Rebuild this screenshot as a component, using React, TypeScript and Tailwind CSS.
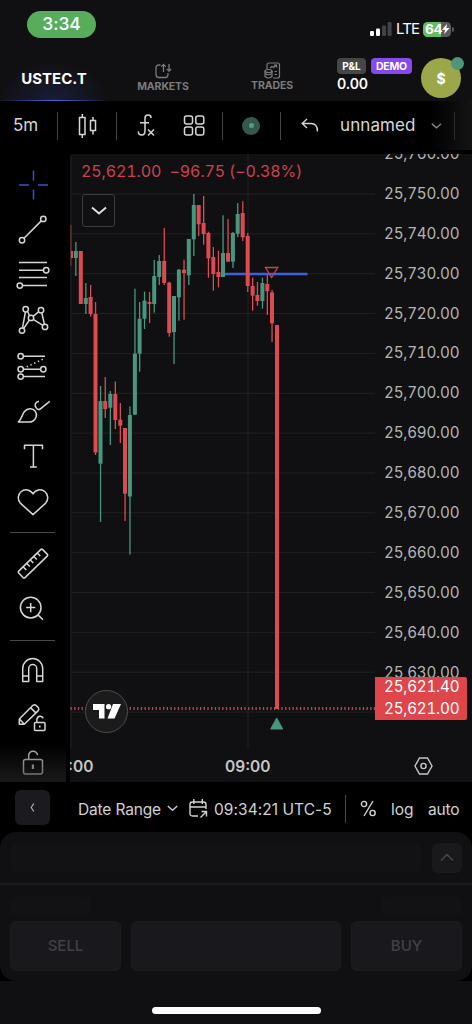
import type { ReactNode } from "react";

const RED = "#df4950";
const GREEN = "#47977f";

// x, high, low, body top, body bottom, up
const candles: [number, number, number, number, number, boolean][] = [
  [75.8, 242, 276, 251, 258, true],
  [80.8, 251, 304, 251, 304, false],
  [85.8, 283, 314, 298, 304, true],
  [90.6, 285, 316.5, 297, 314, false],
  [95.5, 302, 455, 314, 452.5, false],
  [100.5, 386, 522, 401, 463.7, true],
  [105.2, 377, 418, 401, 409, false],
  [110.3, 391, 445, 394, 407.7, true],
  [115.3, 381.5, 429, 394, 420, false],
  [120.3, 403, 443, 419.7, 425.7, false],
  [125, 428, 521, 428, 493.7, false],
  [129.9, 406.5, 554.7, 415, 496.5, true],
  [134.9, 288.7, 414.7, 353.7, 414.7, true],
  [139.6, 302, 371.7, 318.7, 353.7, true],
  [144.5, 291.7, 329, 300.7, 318.7, true],
  [149.5, 292, 323, 302, 304, false],
  [154.2, 260, 312.7, 276, 304, true],
  [159.2, 255, 285, 261, 277, true],
  [164.2, 228, 285, 261, 283, false],
  [169.2, 281.7, 336.7, 282.7, 333, false],
  [174, 296, 364, 296, 332, true],
  [178.9, 269, 320.7, 269.7, 297.3, true],
  [184, 259.7, 319.7, 269.7, 273, false],
  [188.8, 239, 285, 239, 275.3, true],
  [193.8, 194, 256, 205, 239.3, true],
  [198.7, 205, 236, 205, 224.3, false],
  [203.6, 196, 244.7, 223, 234, false],
  [208.4, 231.7, 277.7, 233, 258.3, false],
  [213.3, 247, 290.7, 257, 274, false],
  [218.4, 250.7, 287.3, 272, 277, false],
  [223, 215.3, 277, 253, 277, true],
  [228, 219, 261.7, 253, 261.7, false],
  [232.9, 232, 268, 233, 261.7, true],
  [237.7, 203, 237, 214, 233.7, true],
  [242.7, 201.3, 241, 213, 237.3, false],
  [247.7, 233, 292, 236, 286, false],
  [252.6, 277.7, 310.7, 286, 295.7, false],
  [257.4, 282, 305.7, 295, 301, false],
  [262.4, 277.7, 308.7, 283, 301, true],
  [267.3, 275, 315, 284, 291.3, false],
  [272, 290, 342, 292.3, 323.3, false],
  [277, 325, 709, 325, 709, false],
];

const prices = [
  "25,760.00", "25,750.00", "25,740.00", "25,730.00", "25,720.00", "25,710.00", "25,700.00",
  "25,690.00", "25,680.00", "25,670.00", "25,660.00", "25,650.00", "25,640.00", "25,630.00",
];

function Tool({ children, color = "#d6d6d6" }: { children: ReactNode; color?: string }) {
  return (
    <svg
      width="44"
      height="45.3"
      viewBox="0 0 44 45.3"
      className="ml-[11px] block shrink-0"
      fill="none"
      stroke={color}
      strokeWidth="1.5"
      strokeLinejoin="round"
    >
      {children}
    </svg>
  );
}

function Divider() {
  return <div className="my-2 ml-[10px] h-[1.5px] w-[45px] shrink-0 bg-[#4a4a4a]" />;
}

function StatusBar() {
  return (
    <div className="flex h-[50px] shrink-0 items-start">
      <div className="mt-[11px] ml-[27px] flex h-[27px] w-[69px] items-center justify-center rounded-full bg-[#58ad5b] text-[17.5px] font-medium tracking-[-0.1px] text-white">
        3:34
      </div>
      <div className="mt-[19px] ml-[274px] flex h-5 items-center">
        <svg width="22" height="14" viewBox="0 0 22 14" className="block">
          <rect x="0" y="9" width="4" height="5" rx="1.2" fill="#fff" />
          <rect x="6" y="6.5" width="4" height="7.5" rx="1.2" fill="#fff" />
          <rect x="12" y="3.5" width="4" height="10.5" rx="1.2" fill="#424244" />
          <rect x="17.6" y="0" width="4" height="14" rx="1.2" fill="#424244" />
        </svg>
        <span className="ml-[4px] w-[27px] text-[15px] tracking-[-0.9px] text-white">LTE</span>
        <div className="flex h-[15px] w-[28px] items-center overflow-hidden rounded-[4.5px] bg-linear-to-r from-[#62bd63] from-65% to-[#5b5b5e] to-65%">
          <span className="ml-[2px] text-[13.5px] font-bold tracking-[-0.3px] text-white">64</span>
          <svg width="8" height="10" viewBox="0 0 8 10" className="block shrink-0">
            <path d="M5 0 0 5.8h3L2.2 10 7.6 4H4.4z" fill="#fff" />
          </svg>
        </div>
        <div className="ml-[1px] h-[5px] w-[1.5px] rounded-r bg-[#5b5b5e]" />
      </div>
    </div>
  );
}

function NavTabs() {
  return (
    <div className="flex h-[51px] shrink-0">
      <div className="relative flex w-[108px] items-center justify-center bg-[radial-gradient(ellipse_50%_80%_at_50%_100%,#191d38_0%,#101012_100%)] pt-[7px] text-[15px] font-bold text-white">
        USTEC.T
        <div className="absolute bottom-0 left-0 h-[1.5px] w-full bg-linear-to-r from-transparent via-[#4c66dc] to-transparent" />
      </div>
      <div className="flex w-[110px] flex-col items-center pt-[13px] text-[#7b7b7d]">
        <svg width="17" height="16" viewBox="0 0 17 16" fill="none" stroke="currentColor" strokeWidth="1.3">
          <path d="M5.5 2H4Q1 2 1 5v6.5Q1 14.5 4 14.5h6.5Q13 14.5 13 11.5V10M8.5 9V1.500M6.3 3.6l2.200-2.200 2.200 2.200M14 1v7M11.800 6l2.200 2.200L16.200 6" />
        </svg>
        <span className="mt-[1px] text-[10.5px] leading-[14px] font-bold tracking-[-0.1px]">MARKETS</span>
      </div>
      <div className="flex w-[108px] flex-col items-center pt-[12px] text-[#7b7b7d]">
        <svg width="17" height="17" viewBox="0 0 17 17" fill="none" stroke="currentColor" strokeWidth="1.2">
          <path d="M3 7V3Q3 1 5 1h8.500Q15.500 1 15.500 3v11Q15.500 16 13.500 16H9M6 6l2-1.500 1.500 1L12 3M12.500 5.500V3H10M10.500 9.500H13M10.500 12.500H13" />
          <ellipse cx="4.5" cy="9" rx="3.5" ry="1.5" />
          <path d="M1 9v5.500Q4.500 17.500 8 14.500V9M1 11.500q3.500 2.500 7 0" />
        </svg>
        <span className="text-[10.5px] leading-[14px] font-bold tracking-[-0.1px]">TRADES</span>
      </div>
      <div className="ml-[11px] w-[76px] pt-[8px]">
        <div className="flex h-4 gap-[5px] text-[10.5px] font-bold text-white">
          <span className="flex w-[29px] items-center justify-center rounded-[4px] bg-[#464649] text-[10px]">P&amp;L</span>
          <span className="flex w-[41px] items-center justify-center rounded-[4px] bg-[#8549f0] pt-px tracking-[-0.2px]">DEMO</span>
        </div>
        <div className="text-[14px] leading-[19px] font-semibold tracking-[-0.1px] text-white">0.00</div>
      </div>
      <div className="relative mt-[8px] ml-[8px] flex size-[40px] items-center justify-center rounded-full bg-[#9ca749] text-[14px] font-bold text-white">
        $
        <span className="absolute -top-[1px] -right-[3px] size-[13px] rounded-full bg-[#4d9678]" />
      </div>
    </div>
  );
}

function ChartToolbar() {
  return (
    <div className="relative flex h-[49px] shrink-0 items-center bg-black text-[17px] text-[#d6d6d6]">
      <span className="ml-[13px] w-[44px]">5m</span>
      <div className="h-[28px] w-px bg-[#434343]" />
      <svg width="20" height="26" viewBox="0 0 20 26" className="ml-[20px]" fill="none" stroke="currentColor" strokeWidth="1.5">
        <path d="M1.500 4.500h5.500v17H1.500zM4.300 4.500V1M4.300 25v-3.500M12.500 7.500H17.500v10h-5zM15 7.500V4M15 17.500v4" />
      </svg>
      <div className="ml-[18px] h-[28px] w-px bg-[#434343]" />
      <svg width="20" height="24" viewBox="0 0 20 24" className="-mt-[2px] ml-[20px]" fill="none" stroke="currentColor" strokeWidth="1.5">
        <path d="M14 5V4.500q0-2.500-3-2.500T8 5v12.500q0 4.500-3.300 4.500T1.300 18.500M3 9.800h9M11 16.500l6 6M17 16.500l-6 6" />
      </svg>
      <svg width="22" height="22" viewBox="0 0 22 22" className="ml-[26px]" fill="none" stroke="currentColor" strokeWidth="1.5">
        <rect x="1.5" y="1" width="8" height="8" rx="2" />
        <rect x="12.8" y="1" width="8" height="8" rx="2" />
        <rect x="1.5" y="12" width="8" height="8" rx="2" />
        <rect x="12.8" y="12" width="8" height="8" rx="2" />
      </svg>
      <div className="ml-[17px] h-[28px] w-px bg-[#434343]" />
      <div className="ml-[19px] flex size-[18px] items-center justify-center rounded-full bg-[#33594a]">
        <div className="size-[5px] rounded-full bg-[#4fa083]" />
      </div>
      <div className="ml-[20px] h-[28px] w-px bg-[#434343]" />
      <svg width="18" height="15" viewBox="0 0 18 15" className="ml-[20px]" fill="none" stroke="currentColor" strokeWidth="1.4">
        <path d="M6 1 1.200 5.500 6 10M1.200 5.500H10q6.500 0 6.500 8" />
      </svg>
      <span className="ml-[21px] w-[91px] tracking-[0.1px]">unnamed</span>
      <svg width="11" height="6" viewBox="0 0 11 6" fill="none" stroke="#9a9a9a" strokeWidth="1.3">
        <path d="m.8.8 4.700 4 4.700-4" />
      </svg>
      <div className="ml-[12px] h-[28px] w-px bg-[#434343]" />
      <div className="absolute top-0 right-0 h-full w-[42px] bg-linear-to-r from-transparent to-[#161617]/90" />
    </div>
  );
}

function DrawingTools() {
  return (
    <div className="relative flex h-full w-[70px] shrink-0 flex-col bg-black pt-[11.5px]">
      <Tool color="#3153d0">
        <path d="M8 23h10M27 23h10M22.500 8.500v10M22.500 27.500v10" />
      </Tool>
      <Tool>
        <circle cx="11" cy="33.2" r="2.7" />
        <circle cx="32.3" cy="11.9" r="2.7" />
        <path d="M13 31.200 30.300 13.900" />
      </Tool>
      <Tool>
        <path d="M8 10.600h28M8 18.200h24.500M8 25.600h28M11.500 33.600H36" />
        <circle cx="35.2" cy="18.2" r="2.7" />
        <circle cx="8.8" cy="33.6" r="2.7" />
      </Tool>
      <Tool>
        <path d="m14.400 15-2.900 15.900M16.500 14.500l2 4M22.200 19.200l5.500-4.300M22.300 22.400l9.500 6M30.800 16l2.600 11.200M18.400 23l-5.600 8.300" />
        <circle cx="14.7" cy="12.3" r="2.7" />
        <circle cx="30" cy="13.3" r="2.7" />
        <circle cx="20" cy="20.9" r="2.7" />
        <circle cx="11" cy="33.6" r="2.7" />
        <circle cx="34" cy="29.9" r="2.7" />
      </Tool>
      <Tool>
        <path d="M12.500 13.300H34M12.500 26.300h17M12.500 33.600H34" />
        <path d="m15.700 23.800 18-8.400" strokeDasharray="1.4 2.7" />
        <circle cx="9.7" cy="13.3" r="2.7" />
        <circle cx="9.7" cy="26.3" r="2.7" />
        <circle cx="32.3" cy="26.3" r="2.7" />
        <circle cx="9.7" cy="33.6" r="2.7" />
      </Tool>
      <Tool>
        <path d="M7.300 34c3.500-3 3.500-7 6.200-10.500 2.800-3.600 8.300-3.600 10.800-.3 2.500 3.500.7 8.300-3.100 10.300-.9.500-1.900.5-2.900.5zM28 13.300c-3.500.5-5 3.500-2.800 6.500 1.500 2.200 3 2.200 4.500.8l9-7.300" />
      </Tool>
      <Tool>
        <path d="M13.500 16.200V12.200h18v4M22.400 12.200V34M19 34h6.800" />
      </Tool>
      <Tool>
        <path d="M22 14.800c-2.500-4.500-8.500-5.200-12-2-3.500 3-3.500 8-.7 11.300L22 35.600l12.700-11.500c2.800-3.300 2.800-8.300-.7-11.300-3.500-3.200-9.500-2.500-12 2z" />
      </Tool>
      <Divider />
      <Tool>
        <path d="M29.700 8.600q1-1 2 0l4.500 4.500q1 1 0 2L14 36.600q-1 1-2 0l-4.300-4.500q-1-1 0-2zM12.300 26l3 3M15.800 22.500l3 3M19.300 19l3 3M22.800 15.500l3 3M26.300 12l3 3" />
      </Tool>
      <Tool>
        <circle cx="19.7" cy="20.6" r="10.3" />
        <path d="m27.200 28.100 4.800 4.700M19.700 16v9.200M15.100 20.600h9.200" />
      </Tool>
      <Divider />
      <Tool>
        <path d="M11.700 32.600V19.500a10 10 0 0 1 20 0v13.100h-6V19.500a4 4 0 0 0-8 0v13.100zM11.700 26.900h6M25.700 26.900h6" />
      </Tool>
      <Tool>
        <path d="M8.300 29.300V24L22 10.300q1.500-1.200 3 0l2.300 2.300q1.200 1.500 0 3L13.300 29.300zM19.500 12.600l5.300 5.300M8.500 24l4.800 5.300" />
        <rect x="23.5" y="27.6" width="10.5" height="8" rx="1" />
        <path d="M25.900 27.600v-3.200q.4-3.200 3.200-3.200 2.400 0 2.900 2.200M28.800 30.500v2" />
      </Tool>
      <Tool color="#b4b4b4">
        <rect x="12.5" y="19.5" width="19" height="14.5" rx="2" />
        <path d="M17.700 19.500v-4.300q.6-4 4.300-4t4.600 4" />
        <path d="M21.900 24.500v4.500" strokeWidth="2.2" />
      </Tool>
      <div className="absolute bottom-0 left-0 h-[38px] w-[66px] bg-linear-to-b from-transparent to-[#2a2a2a]/60" />
    </div>
  );
}

function Chart() {
  return (
    <div className="relative mt-[4px] flex w-[402px] flex-col overflow-hidden rounded-tl-[4px] bg-[#101012]">
      <div className="flex h-[594px]">
        <svg width="305" height="594" viewBox="70 154 305 594" className="block shrink-0">
          <g stroke="#202023" strokeWidth="1">
            {prices.map((p, i) => (
              <path key={p} d={`M71 ${194 + i * 39.85}H375`} />
            ))}
            <path d="M248 154V748M71 154V748" />
          </g>
          <path d="M70.500 708.500H375" stroke="#c2464e" strokeWidth="3" strokeDasharray="1.3 2.4" />
          <path d="M223 274H307.500" stroke="#3e5fdc" strokeWidth="2.6" />
          <path d="M71 225V266" stroke="#7e3238" strokeWidth="1.2" />
          <path d="M71 251h2v7h-2z" fill={RED} />
          {candles.map(([x, high, low, top, bottom, up]) => (
            <g key={x} fill={up ? GREEN : RED}>
              <rect x={x - 0.6} y={high} width="1.3" height={low - high} />
              <rect x={x - 2} y={top} width="4" height={bottom - top} />
            </g>
          ))}
          <path d="M265.500 267.500h12.200l-6.100 10z" fill="none" stroke="#c8444c" strokeWidth="1.3" />
          <path d="m276.700 718 6 11h-12z" fill={GREEN} stroke={GREEN} strokeLinejoin="round" />
        </svg>
        <div className="relative w-[97px] text-[15.2px] tracking-[-0.2px] text-[#b4b4b5] tabular-nums">
          <div className="-mt-[20px] pl-[9px]">
            {prices.map((p) => (
              <div key={p} className="h-[39.9px] leading-[39.9px]">{p}</div>
            ))}
          </div>
          <div className="absolute top-[523px] left-0 h-[43px] w-[92px] rounded-r-[2px] bg-[#de464c] pl-[9px] text-white">
            <div className="h-[21.5px] leading-[20px]">25,621.40</div>
            <div className="h-[21.5px] leading-[20px]">25,621.00</div>
          </div>
        </div>
      </div>
      <div className="flex h-[34px] items-center pt-[3px] text-[15.5px] font-semibold text-[#c6c6c7]">
        <span className="-ml-[2px] w-[157px]">:00</span>
        <span className="w-[189px]">09:00</span>
        <svg width="20" height="18" viewBox="0 0 20 18" className="-mt-[2px]" fill="none" stroke="#c6c6c7" strokeWidth="1.4">
          <path d="M5.500 1h8l4.500 8-4.500 8h-8L1 9z" />
          <circle cx="9.5" cy="9" r="2.6" />
        </svg>
      </div>

      <div className="absolute top-[8px] left-[11px] text-[16px] leading-[19px] tracking-[-0.12px] whitespace-pre text-[#cb424c] tabular-nums">
        25,621.00  −96.75 (−0.38%)
      </div>
      <div className="absolute top-[40px] left-[12px] flex size-[33px] items-center justify-center rounded-[3px] border border-[#3c3c3e] bg-[#101012]">
        <svg width="16" height="10" viewBox="0 0 16 10" fill="none" stroke="#e0e0e0" strokeWidth="1.9">
          <path d="m1 1.500 7 6 7-6" />
        </svg>
      </div>
      <div className="absolute top-[536px] left-[15px] flex size-[43px] items-center justify-center rounded-full border border-[#4c4c4e] bg-[#1b1b1c]">
        <svg width="28" height="15" viewBox="0 0 28 15" fill="#fff">
          <path d="M0 0h11.500v14.500H6V6H0zM20 0h8l-6.500 14.500h-7z" />
          <circle cx="15.6" cy="2.7" r="2.6" />
        </svg>
      </div>
    </div>
  );
}

function RangeBar() {
  return (
    <div className="flex h-[50px] items-center bg-black text-[15.5px] text-[#d2d2d2]">
      <div className="ml-[15px] flex size-[35px] items-center justify-center rounded-[6px] bg-[#1b1b1f]">
        <svg width="5" height="9" viewBox="0 0 5 9" fill="none" stroke="#b0b0b0" strokeWidth="1.2">
          <path d="M3.800.5 1.200 4.500l2.600 4" />
        </svg>
      </div>
      <span className="ml-[28px] w-[89px] pt-[5px] tracking-[-0.15px] whitespace-nowrap">Date Range</span>
      <svg width="11" height="7" viewBox="0 0 11 7" className="mt-[2px]" fill="none" stroke="currentColor" strokeWidth="1.3">
        <path d="m.8 1 4.700 4.300L10.200 1" />
      </svg>
      <svg width="19" height="21" viewBox="0 0 19 21" className="mt-[2px] ml-[11px]" fill="none" stroke="currentColor" strokeWidth="1.4">
        <path d="M9 18H3.500Q1 18 1 15.500v-9Q1 4 3.500 4h11Q17 4 17 6.500V11M1 9h16M4.800 1v5M13.300 1v5M11.500 19.500l6-6M12.500 13.500h5v5" />
      </svg>
      <span className="ml-[6px] w-[131px] pt-[5px] tracking-[0.05px] whitespace-nowrap">09:34:21 UTC-5</span>
      <div className="mt-[3px] h-[28px] w-px bg-[#4a4a4a]" />
      <svg width="17" height="17" viewBox="0 0 17 17" className="mt-[3px] ml-[14px]" fill="none" stroke="currentColor" strokeWidth="1.4">
        <circle cx="4" cy="4" r="2.6" />
        <circle cx="12.6" cy="13" r="2.6" />
        <path d="M13 1 4 16" />
      </svg>
      <span className="ml-[14px] w-[37px] pt-[5px]">log</span>
      <span className="pt-[5px] tracking-[-0.15px]">auto</span>
    </div>
  );
}

function OrderPanel() {
  return (
    <div className="flex-1 bg-[#101012]">
      <div className="bg-black">
        <div className="h-[149px] rounded-[16px] bg-[#101012]">
          <div className="flex h-[53px] items-center justify-between border-b-2 border-[#1a1a1c] px-[10px]">
            <div className="h-[30px] w-[412px] rounded-[8px] bg-[#121215]" />
            <div className="flex size-[30px] items-center justify-center rounded-[6px] bg-[#19191c]">
              <svg width="14" height="9" viewBox="0 0 14 9" fill="none" stroke="#48484b" strokeWidth="1.5">
                <path d="m1 7.500 6-6 6 6" />
              </svg>
            </div>
          </div>
          <div className="mt-[12px] flex h-[18px] justify-between px-[10px]">
            <div className="w-[80px] rounded bg-[#121215]" />
            <div className="w-[80px] rounded bg-[#121215]" />
          </div>
          <div className="mt-[6px] flex h-[50px] gap-[10px] px-[10px] text-[15px] font-medium text-[#414145]">
            <div className="flex w-[111px] items-center justify-center rounded-[6px] border border-[#1c1c1f] bg-[#19191d]">SELL</div>
            <div className="flex-1 rounded-[6px] border border-[#1c1c1f] bg-[#19191d]" />
            <div className="flex w-[111px] items-center justify-center rounded-[6px] border border-[#1c1c1f] bg-[#19191d]">BUY</div>
          </div>
        </div>
      </div>
      <div className="mx-auto mt-[26px] h-[7px] w-[169px] rounded-full bg-white" />
    </div>
  );
}

export default function App() {
  return (
    <div className="flex h-[1024px] w-[472px] flex-col overflow-hidden bg-[#101012] font-['Inter',sans-serif]">
      <StatusBar />
      <NavTabs />
      <ChartToolbar />
      <div className="flex h-[632px] shrink-0 bg-black">
        <DrawingTools />
        <Chart />
      </div>
      <RangeBar />
      <OrderPanel />
    </div>
  );
}
